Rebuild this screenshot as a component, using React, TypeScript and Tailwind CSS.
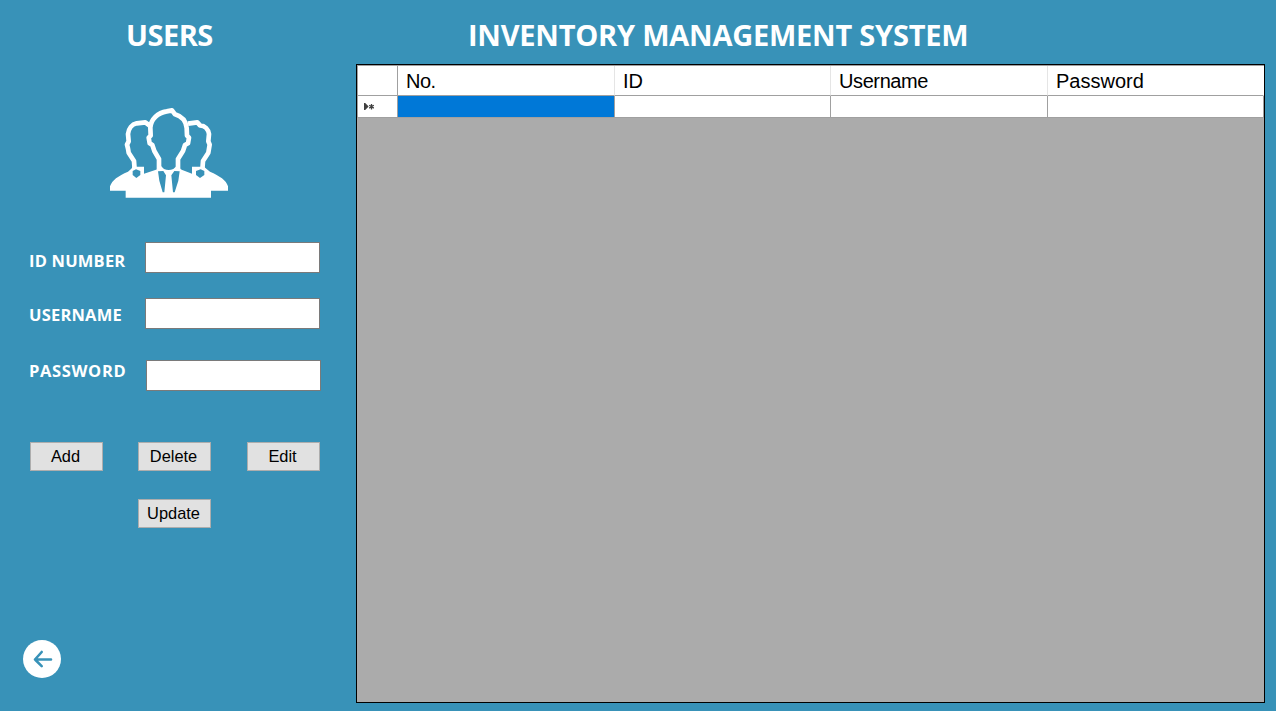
import React from "react";

const columns = [
  { name: "No.", text: "tracking-[-0.5px]" },
  { name: "ID", text: "tracking-[0px]" },
  { name: "Username", text: "tracking-[-0.4px]" },
  { name: "Password", text: "tracking-[0px]" },
];

function UsersIcon() {
  return (
    <svg className="ml-[109px] mt-[56px] block h-[91px] w-[120px]" viewBox="27 21 360 273" fill="none">
      <path
        d="M30 272V259C36 240 54 228 84 215L94 206L98 200H132V221L168 209L183 198L192 207Q206 213 220 207L230 198L245 209L276 221V200H312L319 206L330 215C359 228 379 240 384 259V272H333V293H77V272Z"
        fill="#fff"
      />
      <path
        d="M104 210L102 183L86 158L84 146L81 134L86 124L84 102C86 86 96 73 110 70L136 67L149 77M307 210L309 183L325 158L327 146L329 134L325 124L327 102C325 89 315 77 300 76L292 67L264 71"
        stroke="#fff"
        strokeWidth="14"
        strokeLinejoin="round"
      />
      <path
        d="M177 207V177L163 153L157 135L149 130L146 113L152 107L151 83C153 57 174 38 200 34L216 31L225 43C246 49 258 65 260 84L261 107L267 113L264 130L255 135L249 153L234 177V207"
        stroke="#fff"
        strokeWidth="14"
        strokeLinejoin="round"
      />
      <path
        d="M174 214L190 213L198 226L193 277H188L178 242ZM239 214L223 213L214 226L219 277H224L235 242ZM98 213L108 208L121 213V225L109 234L98 225ZM288 213L302 208L313 213V225L300 234L288 225Z"
        fill="#3892b8"
      />
    </svg>
  );
}

function Field({ label, row, caption, input }: { label: string; row: string; caption: string; input: string }) {
  return (
    <label className={`flex h-[31px] ${row}`}>
      <span
        className={`block shrink-0 whitespace-nowrap pl-[29px] font-['Open_Sans',sans-serif] text-[16.5px] font-bold leading-[24px] text-white ${caption}`}
      >
        {label}
      </span>
      <input className={`h-[31px] w-[175px] shrink-0 border border-[#7a7a7a] bg-white px-1 outline-none ${input}`} />
    </label>
  );
}

function FormButton({ children }: { children: string }) {
  return (
    <button className="h-[29px] w-[73px] border border-[#adadad] bg-[#e1e1e1] pr-[2px] text-center text-[16.4px] leading-[27px] text-black">
      <span className="block h-[27px]">{children}</span>
    </button>
  );
}

function Sidebar() {
  return (
    <aside className="flex w-[356px] shrink-0 flex-col">
      <h1 className="mt-[14px] h-[37px] whitespace-nowrap pl-[126px] pt-px font-['Open_Sans',sans-serif] text-[29px] font-bold leading-[40px] tracking-[-0.5px] text-white">
        USERS
      </h1>
      <UsersIcon />
      <form className="pt-[44px]" onSubmit={(e) => e.preventDefault()}>
        <Field label="ID NUMBER" row="" caption="w-[145px] mt-[7px] tracking-[0.2px]" input="" />
        <Field label="USERNAME" row="mt-[25px]" caption="w-[145px] mt-[5px] tracking-[0.2px]" input="" />
        <Field label="PASSWORD" row="mt-[31px]" caption="w-[146px] -mt-px tracking-[0.65px]" input="" />
        <div className="ml-[30px] mt-[51px] flex">
          <FormButton>Add</FormButton>
          <div className="ml-[35px] mr-[36px] flex">
            <FormButton>Delete</FormButton>
          </div>
          <FormButton>Edit</FormButton>
        </div>
        <div className="ml-[138px] mt-[28px] flex">
          <FormButton>Update</FormButton>
        </div>
      </form>
      <button aria-label="Back" className="ml-[23px] mt-[112px] h-[38px] w-[38px] rounded-full bg-white">
        <svg className="block h-[38px] w-[38px]" viewBox="0 0 38 38" fill="none">
          <path
            d="M28 19.5H12M18.7 12L12 19.5L18.7 26.2"
            stroke="#3892b8"
            strokeWidth="2.6"
            strokeLinecap="round"
            strokeLinejoin="round"
          />
        </svg>
      </button>
    </aside>
  );
}

function UsersGrid() {
  return (
    <div className="h-[639px] w-[909px] border border-black bg-[#ababab]">
      <div className="flex h-[53px] w-full border-l border-t border-[#a0a0a0]">
        <div className="w-[40px] shrink-0 border-r border-[#a0a0a0] bg-white">
          <div className="h-[30px] border-b border-[#a0a0a0]" />
          <div className="flex h-[22px] items-center border-b border-[#a0a0a0] pl-[6px]">
            <svg className="block h-[9px] w-[11px]" viewBox="0 0 11 9" fill="none">
              <path d="M0 1V8H1.2L4.4 4.7V4.3L1.2 1Z" fill="#404040" />
              <path d="M7.5 2V7.4M5.2 3.2L9.8 6.1M9.8 3.2L5.2 6.1" stroke="#404040" strokeWidth="1.3" />
            </svg>
          </div>
        </div>
        <div className="grid flex-1 grid-cols-[217px_216px_217px_216px]">
          {columns.map(({ name, text }, i) => (
            <div key={name} className="bg-white">
              <div
                className={`h-[30px] whitespace-nowrap border-b border-r border-b-[#a0a0a0] pl-[8px] text-[20px] leading-[30px] text-black ${text} ${i === 3 ? "border-r-white" : "border-r-[#e5e5e5]"}`}
              >
                {name}
              </div>
              <div className={`h-[22px] border-b border-r border-[#a0a0a0] ${i === 0 ? "bg-[#0078d7]" : "bg-white"}`} />
            </div>
          ))}
        </div>
      </div>
    </div>
  );
}

export default function App() {
  return (
    <div className="flex h-[711px] w-[1276px] overflow-hidden bg-[#3892b8] font-['Liberation_Sans',Arial,sans-serif]">
      <Sidebar />
      <main className="flex flex-col">
        <h2 className="h-[64px] whitespace-nowrap pl-[112px] pt-[15px] font-['Open_Sans',sans-serif] text-[29px] font-bold leading-[40px] tracking-[-0.23px] text-white">
          INVENTORY MANAGEMENT SYSTEM
        </h2>
        <UsersGrid />
      </main>
    </div>
  );
}
